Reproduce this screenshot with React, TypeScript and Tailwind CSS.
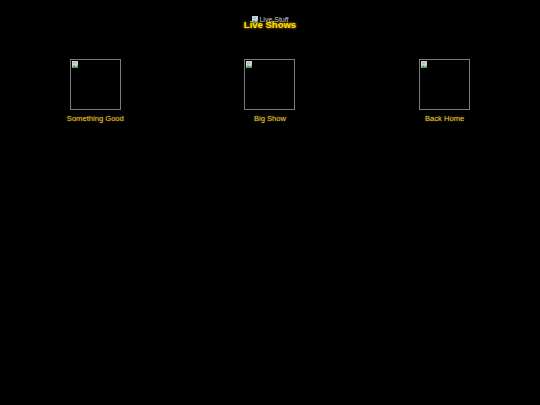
import React from 'react';

const shows = ['Something Good', 'Big Show', 'Back Home'];

function BrokenIcon() {
  return (
    <svg width="7" height="7" viewBox="0 0 7 7" className="absolute left-[1px] top-[1px]">
      <rect x="0" y="0" width="6" height="7" fill="#c9d2d8" />
      <path d="M0 7 L2 4 L4 6 L6 4 L6 7 Z" fill="#4f9a4f" />
      <rect x="1" y="1" width="3" height="2" fill="#9fc0d8" />
    </svg>
  );
}

export default function App() {
  return (
    <div className="min-h-screen bg-black p-2" style={{ fontFamily: '"Liberation Sans", Arial, sans-serif' }}>
      {/* Header: broken banner image with title over it */}
      <div className="relative flex h-[26px] justify-center">
        <div className="relative mt-[7px] flex h-[8px] items-center pl-[8px] text-[7px] leading-none text-[#d0d0d0]">
          <BrokenIcon />
          Live Stuff
        </div>
        <h1 className="absolute left-0 right-0 top-[12px] text-center text-[9.5px] font-bold leading-none text-[#ffe000] [text-shadow:0_0_3px_#b08000,0_0_2px_#806000]">
          Live Shows
        </h1>
      </div>

      <div className="mt-[25px] grid grid-cols-3">
        {shows.map((s) => (
          <div key={s} className="flex flex-col items-center">
            <div className="relative h-[51px] w-[51px] border border-[#7a7a7a]">
              <BrokenIcon />
            </div>
            <span className="mt-[4px] text-[7.6px] leading-[10px] text-[#e6c830] [text-shadow:0_0_2px_#6a5400]">{s}</span>
          </div>
        ))}
      </div>
    </div>
  );
}
